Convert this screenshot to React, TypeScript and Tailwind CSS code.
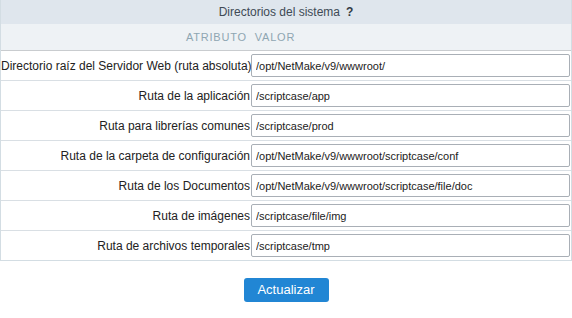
import React from 'react';

// Directorios del sistema form
const ROWS = [
  { label: 'Directorio raíz del Servidor Web (ruta absoluta)', value: '/opt/NetMake/v9/wwwroot/' },
  { label: 'Ruta de la aplicación', value: '/scriptcase/app' },
  { label: 'Ruta para librerías comunes', value: '/scriptcase/prod' },
  { label: 'Ruta de la carpeta de configuración', value: '/opt/NetMake/v9/wwwroot/scriptcase/conf' },
  { label: 'Ruta de los Documentos', value: '/opt/NetMake/v9/wwwroot/scriptcase/file/doc' },
  { label: 'Ruta de imágenes', value: '/scriptcase/file/img' },
  { label: 'Ruta de archivos temporales', value: '/scriptcase/tmp' },
];

export default function App() {
  return (
    <div className="w-[572px] h-[318px] bg-white font-['Liberation_Sans',Arial,sans-serif]">
      <div className="w-[572px] border-x border-b border-[#d3dde3]">
        <div className="h-[24px] bg-[#dfe6ed] flex items-center justify-center text-[12px] text-[#404a55]">
          <span>Directorios del sistema</span>
          <span className="ml-[6px] font-bold text-[12px] text-[#333b44]">?</span>
        </div>
        <div className="h-[26px] bg-[#eef2f5] flex items-center pl-[185px] text-[11px] tracking-[0.07em] text-[#8fa6b2]">
          <span>ATRIBUTO</span>
          <span className="ml-[8px]">VALOR</span>
        </div>
        {ROWS.map((row, i) => (
          <div
            key={row.label}
            className={`h-[30px] flex items-center border-t ${i === 0 ? 'border-[#c9cccf]' : 'border-[#d9dfe4]'}`}
          >
            <div className="w-[250px] text-right text-[12px] text-[#222] whitespace-nowrap pr-[1px]">{row.label}</div>
            <input
              type="text"
              defaultValue={row.value}
              className="flex-1 mr-[1px] h-[23px] border border-[#a9afb6] rounded-[2px] px-[4px] text-[11px] text-[#222] bg-white outline-none"
            />
          </div>
        ))}
      </div>
      <div className="flex justify-center mt-[17px]">
        <button className="w-[85px] h-[24px] rounded-[3px] bg-[#2186d4] text-white text-[13px]">Actualizar</button>
      </div>
    </div>
  );
}
